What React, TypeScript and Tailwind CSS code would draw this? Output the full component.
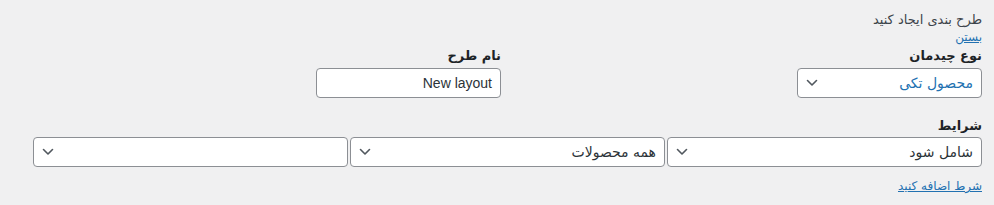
import React from "react";

const Chevron = () => (
  <svg width="12" height="8" viewBox="0 0 12 8" fill="none" className="shrink-0">
    <path d="M1.5 1.5 L6 6 L10.5 1.5" stroke="#50575e" strokeWidth="1.6" strokeLinecap="round" strokeLinejoin="round" />
  </svg>
);

const Select = ({ text, blue, className }: { text: string; blue?: boolean; className?: string }) => (
  <div
    className={
      "flex items-center justify-between h-[30px] bg-white border border-[#8c8f94] rounded-[4px] pr-[8px] pl-[8px] " +
      (className || "")
    }
  >
    <span className={"text-[14px] leading-none " + (blue ? "text-[#2271b1]" : "text-[#2c3338]")}>{text}</span>
    <Chevron />
  </div>
);

export default function App() {
  return (
    <div
      dir="rtl"
      className="w-full h-[205px] bg-[#f0f0f1] text-[#3c434a] pr-[12px] pl-[33px] pt-[10px]"
      style={{ fontFamily: '"DejaVu Sans", "Noto Sans", sans-serif' }}
    >
      <div className="text-[13px] leading-[19px]">طرح بندی ایجاد کنید</div>
      <div className="text-[12px] leading-[15px] mt-[1px]">
        <a href="#" className="text-[#2271b1] underline">بستن</a>
      </div>
      <div className="flex mt-[1px]">
        <div className="w-[481px] flex flex-col items-start">
          <div className="text-[13px] font-bold leading-[19px] text-[#1d2327]">نوع چیدمان</div>
          <div className="mt-[3px] w-[185px]">
            <Select text="محصول تکی" blue />
          </div>
        </div>
        <div className="flex flex-col items-start">
          <div className="text-[13px] font-bold leading-[19px] text-[#1d2327]">نام طرح</div>
          <div className="mt-[3px] w-[185px] h-[30px] bg-white border border-[#8c8f94] rounded-[4px] flex items-center px-[8px]">
            <span dir="ltr" className="text-[14px] text-[#2c3338] ml-auto" style={{ fontFamily: '"Liberation Sans", sans-serif' }}>
              New layout
            </span>
          </div>
        </div>
      </div>
      <div className="mt-[18px] text-[13px] font-bold leading-[19px] text-[#1d2327]">شرایط</div>
      <div className="mt-[2px] grid grid-cols-3 gap-[2px]">
        <Select text="شامل شود" />
        <Select text="همه محصولات" />
        <Select text="" />
      </div>
      <div className="mt-[11px] text-[12px] leading-[16px]">
        <a href="#" className="text-[#2271b1] underline">شرط اضافه کنید</a>
      </div>
    </div>
  );
}
